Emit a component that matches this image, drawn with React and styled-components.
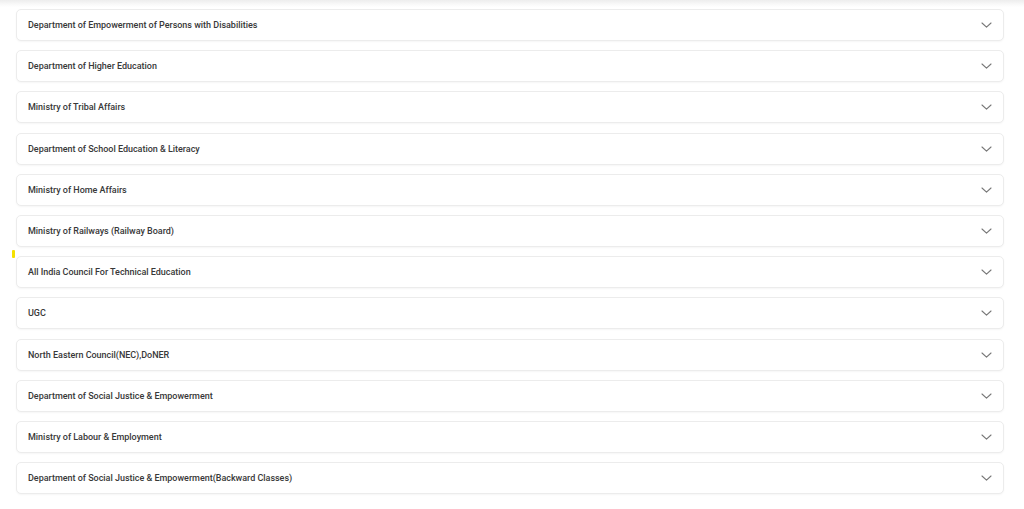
import styled, { createGlobalStyle } from "styled-components";

const GlobalStyle = createGlobalStyle`
  html, body {
    margin: 0;
    padding: 0;
    background: #fff;
  }
  body {
    font-family: Roboto, "Liberation Sans", Arial, sans-serif;
  }
`;

const departments = [
  "Department of Empowerment of Persons with Disabilities",
  "Department of Higher Education",
  "Ministry of Tribal Affairs",
  "Department of School Education & Literacy",
  "Ministry of Home Affairs",
  "Ministry of Railways (Railway Board)",
  "All India Council For Technical Education",
  "UGC",
  "North Eastern Council(NEC),DoNER",
  "Department of Social Justice & Empowerment",
  "Ministry of Labour & Employment",
  "Department of Social Justice & Empowerment(Backward Classes)",
];

export default function App() {
  return (
    <>
      <GlobalStyle />
      <Page>
        <Marker />
        <List>
          {departments.map((name) => (
            <Item key={name}>
              <Title>{name}</Title>
              <Chevron viewBox="0 0 11 6" aria-hidden="true">
                <path d="M1 1l4.5 4.2L10 1" />
              </Chevron>
            </Item>
          ))}
        </List>
      </Page>
    </>
  );
}

const Page = styled.div`
  position: relative;
  width: 1024px;
  height: 509px;
  box-sizing: border-box;
  padding: 9px 20px 0 16px;
  background: linear-gradient(180deg, #ededed 0px, #f8f8f8 4px, #ffffff 7px);
  overflow: hidden;
`;

const List = styled.div`
  display: flex;
  flex-direction: column;
  gap: 9.2px;
`;

const Item = styled.div`
  display: flex;
  align-items: center;
  justify-content: space-between;
  height: 32px;
  box-sizing: border-box;
  padding: 0 11px 0 11px;
  background: #fff;
  border: 1px solid #ececec;
  border-radius: 5px;
  box-shadow: 0 1px 2px rgba(0, 0, 0, 0.04);
`;

const Title = styled.span`
  font-size: 9px;
  font-weight: 500;
  color: #383838;
  letter-spacing: -0.02px;
`;

const Chevron = styled.svg`
  width: 11px;
  height: 6px;
  fill: none;
  stroke: #777;
  stroke-width: 1.1;
  stroke-linecap: round;
  stroke-linejoin: round;
`;

const Marker = styled.span`
  position: absolute;
  left: 12px;
  top: 250px;
  width: 3px;
  height: 8px;
  background: #f5e100;
  border-radius: 1px;
`;
